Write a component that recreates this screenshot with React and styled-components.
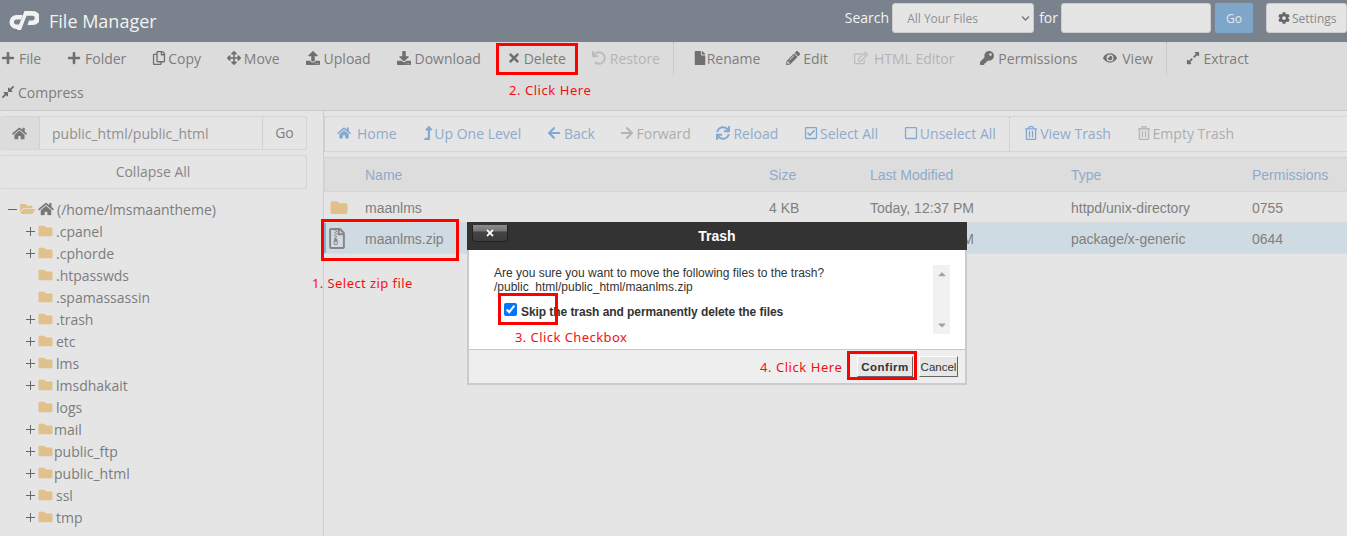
import React from 'react';
import styled, { createGlobalStyle } from 'styled-components';
import {
  FaPlus, FaRegCopy, FaArrowsAlt, FaUpload, FaDownload, FaTimes, FaUndo, FaFile,
  FaPencilAlt, FaRegEdit, FaKey, FaEye, FaExpandAlt, FaCompressAlt, FaHome, FaCog,
  FaArrowLeft, FaArrowRight, FaSync, FaRegCheckSquare, FaRegSquare, FaRegTrashAlt,
  FaLevelUpAlt, FaFolder, FaFolderOpen, FaRegFileArchive, FaChevronDown,
  FaCaretUp, FaCaretDown,
} from 'react-icons/fa';

const Global = createGlobalStyle`
  html, body { margin: 0; padding: 0; background: #e5e5e5; }
  body { font-family: "Open Sans", sans-serif; font-size: 14px; color: #7c7c7c; overflow: hidden; }
  * { box-sizing: border-box; }
`;

const Page = styled.div`
  position: relative;
  width: 1347px;
  height: 536px;
  overflow: hidden;
`;

const Header = styled.header`
  height: 42px;
  background: #7a838d;
  display: flex;
  align-items: center;
  color: #f2f2f2;
  padding-left: 9px;
`;

const Logo = styled.svg`
  width: 30px;
  height: 20px;
  margin-right: 10px;
`;

const Title = styled.div`
  font-size: 18px;
  flex: 1;
`;

const SearchGroup = styled.div`
  display: flex;
  align-items: center;
  align-self: flex-start;
  padding-top: 3px;
`;

const SearchLabel = styled.span`
  font-size: 14px;
  margin: -2px ${p => p.$right}px 0 ${p => p.$left}px;
`;

const SearchSelect = styled.div`
  width: 142px;
  height: 30px;
  background: #e5e5e5;
  border: 1px solid #ccc;
  border-radius: 3px;
  display: flex;
  align-items: center;
  justify-content: space-between;
  padding: 0 3px 0 14px;
  font-size: 12px;
  color: #909090;
  svg { font-size: 9px; color: #777; }
`;

const SearchInput = styled.div`
  width: 150px;
  height: 30px;
  background: #e5e5e5;
  border: 1px solid #ccc;
  border-radius: 3px;
  margin-right: 4px;
`;

const GoButton = styled.div`
  width: 38px;
  height: 30px;
  background: #7ea6cb;
  border-radius: 2px;
  color: #e8e8e8;
  font-size: 12px;
  display: flex;
  align-items: center;
  justify-content: center;
  margin-right: 13px;
`;

const SettingsButton = styled.div`
  width: 81px;
  height: 30px;
  background: #e5e5e5;
  border: 1px solid #ccc;
  border-radius: 3px;
  color: #888;
  font-size: 12px;
  display: flex;
  align-items: center;
  gap: 2px;
  padding-left: 11px;
  svg { color: #666; font-size: 12px; }
`;

const Toolbar = styled.nav`
  height: 69px;
  background: #dcdcdc;
  border-bottom: 1px solid #cacaca;
  display: flex;
  flex-wrap: wrap;
  align-content: flex-start;
  column-gap: 25.85px;
  padding-left: 1px;
`;

const ToolItem = styled.div`
  height: 34px;
  padding-bottom: 2px;
  display: flex;
  align-items: center;
  color: ${p => p.$disabled ? '#b4b4b4' : '#7c7c7c'};
  svg { font-size: 14px; color: ${p => p.$disabled ? '#bcbcbc' : '#6f6f6f'}; }
`;

const IconSlot = styled.span`
  width: ${p => p.$w}px;
  flex: none;
  display: flex;
  align-items: center;
`;

const ToolDivider = styled.div`
  width: 1px;
  height: 34px;
  border-left: 1px dotted #bdbdbd;
  margin: 0 -7px 0 -13px;
`;

const Main = styled.div`
  display: grid;
  grid-template-columns: 324px 1fr;
  height: 426px;
`;

const Sidebar = styled.aside`
  border-right: 1px solid #cfcfcf;
  padding: 5px 16px 0 0;
`;

const PathBar = styled.div`
  height: 34px;
  display: flex;
  border: 1px solid #d5d5d5;
  border-left: 0;
  border-radius: 3px;
  margin-bottom: 5px;
`;

const PathHome = styled.div`
  width: 40px;
  background: #dcdcdc;
  border-right: 1px solid #d0d0d0;
  display: flex;
  align-items: center;
  justify-content: center;
  color: #777;
  svg { font-size: 15px; }
`;

const PathText = styled.div`
  flex: 1;
  padding-left: 12px;
  line-height: 33px;
  color: #909090;
`;

const PathGo = styled.div`
  width: 44px;
  border-left: 1px solid #d0d0d0;
  line-height: 32px;
  text-align: center;
  color: #808080;
`;

const CollapseAll = styled.div`
  height: 34px;
  border: 1px solid #d5d5d5;
  border-left: 0;
  border-radius: 3px;
  line-height: 32px;
  text-align: center;
  color: #858585;
  margin-bottom: 9px;
`;

const Tree = styled.div`
  padding-left: 7px;
`;

const TreeRow = styled.div`
  height: 22px;
  display: flex;
  align-items: center;
  padding-left: ${p => p.$root ? 0 : 18}px;
`;

const Toggle = styled.span`
  width: 11px;
  height: 11px;
  position: relative;
  flex: none;
  margin-right: 2px;
  visibility: ${p => p.$hidden ? 'hidden' : 'visible'};
  &::before {
    content: "";
    position: absolute;
    left: 1px;
    right: 1px;
    top: 5px;
    height: 1px;
    background: #666;
  }
  &::after {
    content: "";
    display: ${p => p.$open ? 'none' : 'block'};
    position: absolute;
    top: 1px;
    bottom: 1px;
    left: 5px;
    width: 1px;
    background: #666;
  }
`;

const TreeFolder = styled.span`
  color: #e0c08b;
  display: flex;
  flex: none;
  margin-right: ${p => p.$tight ? 1 : 3}px;
  svg { width: 15px; height: 14px; }
`;

const TreeHome = styled.span`
  color: #777;
  display: flex;
  margin: 0 3px 0 2px;
  svg { width: 16px; height: 14px; }
`;

const Content = styled.section`
  padding-top: 5px;
`;

const FileBar = styled.div`
  height: 36px;
  border: 1px solid #d5d5d5;
  border-left-color: #d0d0d0;
  border-right: 0;
  display: flex;
  align-items: center;
  column-gap: 25.7px;
  padding: 0 0 2px 12px;
  margin-bottom: 5px;
`;

const FileAction = styled.div`
  display: flex;
  align-items: center;
  color: ${p => p.$disabled ? '#adadad' : '#8fabcb'};
  svg { font-size: 14px; color: ${p => p.$disabled ? '#b4b4b4' : '#83a9d3'}; }
`;

const FileDivider = styled.div`
  width: 1px;
  height: 34px;
  margin: 2px -11px 0 -13px;
  border-left: 1px dotted #c4c4c4;
`;

const Table = styled.div`
  font-family: "Liberation Sans", sans-serif;
`;

const columns = '40px 404px 101px 201px 181px 1fr';

const HeadRow = styled.div`
  display: grid;
  grid-template-columns: ${columns};
  height: 35px;
  background: #dddddd;
  border: 1px solid #d5d5d5;
  border-right: 0;
  align-items: center;
  color: #8fabcb;
  font-size: 14px;
`;

const FileRow = styled.div`
  display: grid;
  grid-template-columns: ${columns};
  height: 31px;
  align-items: center;
  padding: 1px 0 0 1px;
  background: ${p => p.$selected ? '#cfdbe2' : 'transparent'};
  border-bottom: 1px solid #dcdcdc;
  box-shadow: ${p => p.$selected ? 'inset 2px 0 0 #7fb2d1' : 'none'};
  color: #7f7f7f;
  font-size: 14px;
`;

const RowIcon = styled.span`
  display: flex;
  padding-left: 4px;
  color: ${p => p.$file ? '#8a8484' : '#e0c08b'};
  svg { width: ${p => p.$file ? 16 : 20}px; height: ${p => p.$file ? 21 : 17}px; }
`;

const Overlay = styled.div`
  position: absolute;
  left: 467px;
  top: 222px;
  width: 500px;
  height: 163px;
  background: #eeeeee;
  border: 2px solid #cbcbcb;
  border-top: 0;
  font-family: "Liberation Sans", Arial, sans-serif;
  font-size: 12px;
  color: #333;
  display: flex;
  flex-direction: column;
`;

const ModalHead = styled.div`
  height: 28px;
  margin: 0 -2px;
  background: #333333;
  color: #fff;
  font-weight: bold;
  font-size: 14px;
  line-height: 28px;
  text-align: center;
  flex: none;
  position: relative;
`;

const ModalClose = styled.div`
  position: absolute;
  left: 5px;
  top: 3px;
  width: 36px;
  height: 17px;
  border-radius: 0 0 4px 4px;
  background: linear-gradient(#8c8c8c 0, #777 35%, #444 45%, #3d3d3d 100%);
  border: 1px solid #222;
  border-top: 0;
  display: flex;
  align-items: center;
  justify-content: center;
  color: #fff;
  svg { font-size: 10px; }
`;

const ModalBody = styled.div`
  height: 100px;
  flex: none;
  background: #fff;
  border-bottom: 1px solid #c8c8c8;
  display: flex;
  padding: 15px 15px 0 25px;
`;

const ModalText = styled.div`
  flex: 1;
  line-height: 14px;
  padding-top: 1px;
`;

const SkipRow = styled.label`
  display: flex;
  align-items: center;
  margin: 11px 0 0 10px;
  font-weight: bold;
  letter-spacing: -0.07px;
  gap: 4px;
`;

const Check = styled.input`
  width: 13px;
  height: 13px;
  margin: -6px 0 0;
  accent-color: #0075ff;
`;

const Scroller = styled.div`
  width: 17px;
  height: 69px;
  background: #f1f1f1;
  display: flex;
  flex-direction: column;
  justify-content: space-between;
  align-items: center;
  padding: 3px 0;
  color: #a3a3a3;
  font-size: 12px;
`;

const ModalFoot = styled.div`
  flex: 1;
  display: flex;
  justify-content: flex-end;
  align-items: center;
  padding-right: 7px;
  gap: 6px;
`;

const FootButton = styled.div`
  width: ${p => p.$primary ? 56 : 39}px;
  height: 21px;
  display: flex;
  align-items: center;
  justify-content: center;
  background: #e6e6e6;
  border: 1px solid;
  border-color: #fff #666 #666 #fff;
  font-size: 11.5px;
  font-weight: ${p => p.$primary ? 'bold' : 'normal'};
  letter-spacing: ${p => p.$primary ? '0.5px' : 0};
`;

const Note = styled.div`
  position: absolute;
  left: ${p => p.$x}px;
  top: ${p => p.$y}px;
  color: #f50f0f;
  font-family: "Noto Sans", sans-serif;
  font-size: 13px;
  line-height: 18px;
  letter-spacing: ${p => p.$spacing || 0.55}px;
  white-space: nowrap;
`;

const RedBox = styled.div`
  position: absolute;
  left: ${p => p.$x}px;
  top: ${p => p.$y}px;
  width: ${p => p.$w}px;
  height: ${p => p.$h}px;
  border: 3px solid #f00;
`;

const tools = [
  [FaPlus, 'File', 18], [FaPlus, 'Folder', 18], [FaRegCopy, 'Copy', 16], [FaArrowsAlt, 'Move', 17],
  [FaUpload, 'Upload', 18], [FaDownload, 'Download', 18], [FaTimes, 'Delete', 17], [FaUndo, 'Restore', 18, true],
  'divider',
  [FaFile, 'Rename', 14], [FaPencilAlt, 'Edit', 17], [FaRegEdit, 'HTML Editor', 20, true], [FaKey, 'Permissions', 18],
  [FaEye, 'View', 19],
  'divider',
  [FaExpandAlt, 'Extract', 18], [FaCompressAlt, 'Compress', 17],
];

const fileActions = [
  [FaHome, 'Home', 20], [FaLevelUpAlt, 'Up One Level', 12], [FaArrowLeft, 'Back', 17],
  [FaArrowRight, 'Forward', 16, true], [FaSync, 'Reload', 17], [FaRegCheckSquare, 'Select All', 16],
  [FaRegSquare, 'Unselect All', 16], 'divider', [FaRegTrashAlt, 'View Trash', 16],
  [FaRegTrashAlt, 'Empty Trash', 16, true],
];

const folders = [
  ['.cpanel', true], ['.cphorde', true], ['.htpasswds', false], ['.spamassassin', false],
  ['.trash', true], ['etc', true], ['lms', true], ['lmsdhakait', true], ['logs', false],
  ['mail', true, true], ['public_ftp', true, true], ['public_html', true, true],
  ['ssl', true], ['tmp', true],
];

const App = () => (
  <Page>
    <Global />
    <Header>
      <Logo viewBox="0 0 30 20">
        <path fill="#f2f2f2" d="M13.5 4H7.5a7 7 0 0 0 0 14H9l1.5-4.5H7.5a2.5 2.5 0 0 1 0-5H12z" />
        <path fill="#f2f2f2" d="M15.5 0H24a7 7 0 0 1 0 14H18.5L20 9.4h3.5a2.3 2.3 0 0 0 0-4.6h-6L12 19H8z" />
      </Logo>
      <Title>File Manager</Title>
      <SearchGroup>
        <SearchLabel $left={0} $right={3}>Search</SearchLabel>
        <SearchSelect>All Your Files<FaChevronDown /></SearchSelect>
        <SearchLabel $left={5} $right={3}>for</SearchLabel>
        <SearchInput />
        <GoButton>Go</GoButton>
        <SettingsButton><FaCog />Settings</SettingsButton>
      </SearchGroup>
    </Header>

    <Toolbar>
      {tools.map((t, i) => {
        if (t === 'divider') return <ToolDivider key={i} />;
        const [Icon, label, w, disabled] = t;
        return <ToolItem key={label} $disabled={disabled}><IconSlot $w={w}><Icon /></IconSlot>{label}</ToolItem>;
      })}
    </Toolbar>

    <Main>
      <Sidebar>
        <PathBar>
          <PathHome><FaHome /></PathHome>
          <PathText>public_html/public_html</PathText>
          <PathGo>Go</PathGo>
        </PathBar>
        <CollapseAll>Collapse All</CollapseAll>
        <Tree>
          <TreeRow $root>
            <Toggle $open />
            <TreeFolder $tight><FaFolderOpen /></TreeFolder>
            <TreeHome><FaHome /></TreeHome>
            (/home/lmsmaantheme)
          </TreeRow>
          {folders.map(([name, toggle, tight]) => (
            <TreeRow key={name}>
              <Toggle $hidden={!toggle} />
              <TreeFolder $tight={tight}><FaFolder /></TreeFolder>
              {name}
            </TreeRow>
          ))}
        </Tree>
      </Sidebar>

      <Content>
        <FileBar>
          {fileActions.map((a, i) => {
            if (a === 'divider') return <FileDivider key={i} />;
            const [Icon, label, w, disabled] = a;
            return <FileAction key={label} $disabled={disabled}><IconSlot $w={w}><Icon /></IconSlot>{label}</FileAction>;
          })}
        </FileBar>
        <Table>
          <HeadRow>
            <span />
            <span>Name</span>
            <span>Size</span>
            <span>Last Modified</span>
            <span>Type</span>
            <span>Permissions</span>
          </HeadRow>
          <FileRow>
            <RowIcon><FaFolder /></RowIcon>
            <span>maanlms</span>
            <span>4 KB</span>
            <span>Today, 12:37 PM</span>
            <span>httpd/unix-directory</span>
            <span>0755</span>
          </FileRow>
          <FileRow $selected>
            <RowIcon $file><FaRegFileArchive /></RowIcon>
            <span>maanlms.zip</span>
            <span />
            <span>Today, 12:37 PM</span>
            <span>package/x-generic</span>
            <span>0644</span>
          </FileRow>
        </Table>
      </Content>
    </Main>

    <Overlay>
      <ModalHead>
        <ModalClose><FaTimes /></ModalClose>
        Trash
      </ModalHead>
      <ModalBody>
        <ModalText>
          Are you sure you want to move the following files to the trash?<br />
          /public_html/public_html/maanlms.zip
          <SkipRow>
            <Check type="checkbox" defaultChecked />
            Skip the trash and permanently delete the files
          </SkipRow>
        </ModalText>
        <Scroller><FaCaretUp /><FaCaretDown /></Scroller>
      </ModalBody>
      <ModalFoot>
        <FootButton $primary>Confirm</FootButton>
        <FootButton>Cancel</FootButton>
      </ModalFoot>
    </Overlay>

    <RedBox $x={496} $y={43} $w={82} $h={32} />
    <RedBox $x={321} $y={219} $w={138} $h={42} />
    <RedBox $x={498} $y={293} $w={60} $h={32} />
    <RedBox $x={847} $y={351} $w={70} $h={29} />
    <Note $x={509} $y={81}>2. Click Here</Note>
    <Note $x={312} $y={274} $spacing={0.42}>1. Select zip file</Note>
    <Note $x={515} $y={328} $spacing={0.43}>3. Click Checkbox</Note>
    <Note $x={760} $y={358}>4. Click Here</Note>
  </Page>
);

export default App;
